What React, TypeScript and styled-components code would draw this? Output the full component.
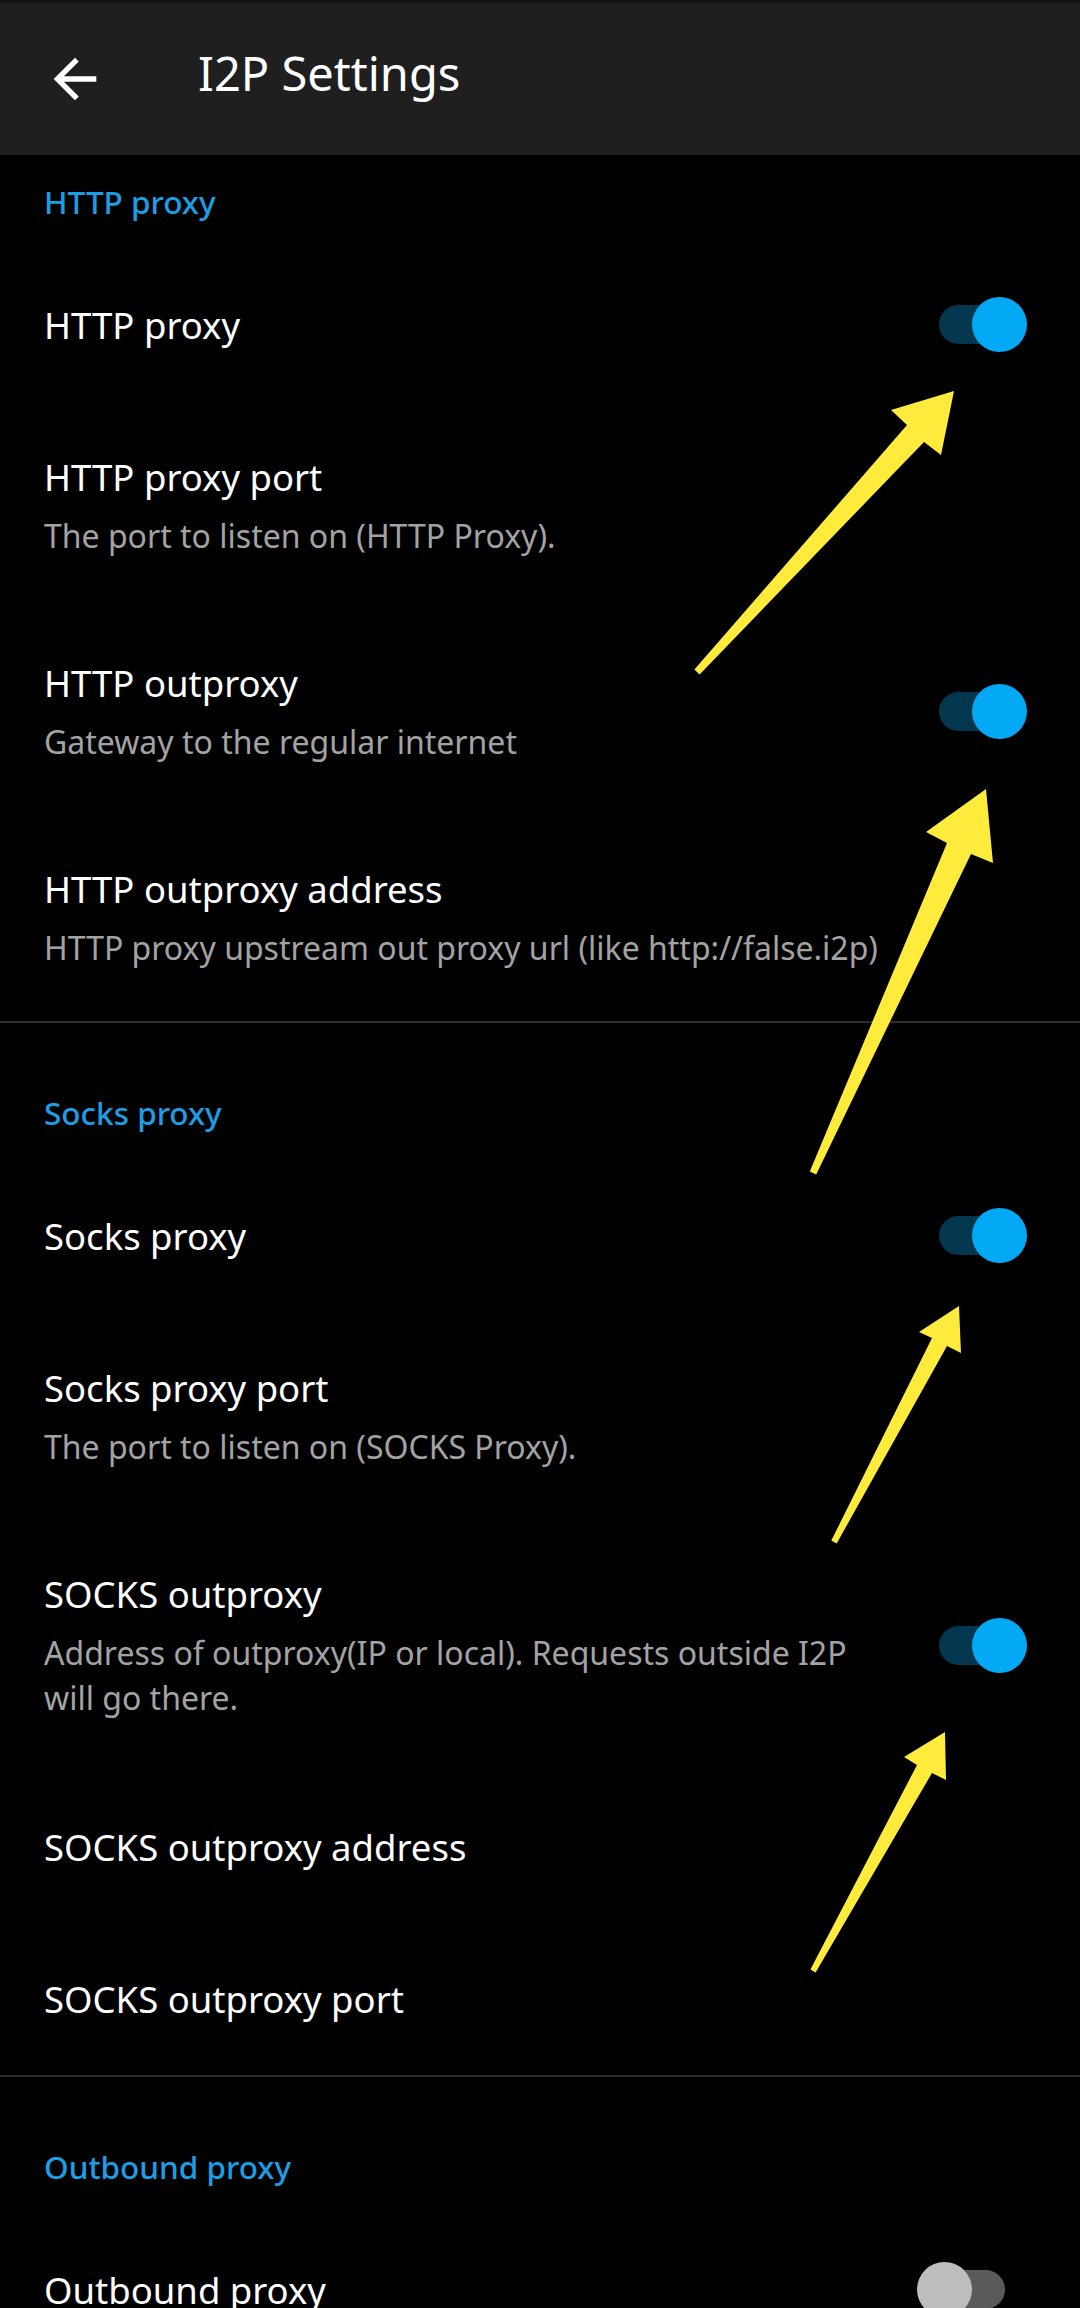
import React from "react";
import styled, { createGlobalStyle } from "styled-components";

const GlobalStyle = createGlobalStyle`
  html, body {
    margin: 0;
    padding: 0;
    background: #000000;
  }
  body {
    font-family: "Noto Sans", "Open Sans", sans-serif;
    -webkit-font-smoothing: antialiased;
  }
`;

const Page = styled.div`
  position: relative;
  width: 1080px;
  min-height: 2308px;
  overflow: hidden;
  background: #000000;
  color: #ffffff;
`;

const AppBar = styled.header`
  display: flex;
  align-items: center;
  height: 155px;
  box-sizing: border-box;
  border-top: 3px solid #141414;
  background: #1f1f1f;
`;

const BackButton = styled.button`
  display: flex;
  align-items: center;
  justify-content: center;
  width: 64px;
  height: 64px;
  margin: 0 0 0 43px;
  padding: 0;
  border: none;
  background: transparent;
  color: #ffffff;
`;

const AppTitle = styled.h1`
  margin: 0 0 12px 91px;
  font-size: 47px;
  font-weight: 400;
  color: #ffffff;
`;

const Section = styled.section<{ $first?: boolean }>`
  display: flex;
  flex-direction: column;
  border-top: ${(p) => (p.$first ? "none" : "2px solid #2c2c2c")};
  padding-top: ${(p) => (p.$first ? "0" : "43px")};
`;

const CategoryTitle = styled.div`
  display: flex;
  align-items: center;
  height: 92px;
  padding-left: 44px;
  font-size: 31.5px;
  font-weight: 500;
  color: #1a9fe6;
`;

const Row = styled.div<{ $hasWidget?: boolean }>`
  display: flex;
  align-items: center;
  min-height: ${(p) => (p.$hasWidget ? "156px" : "152px")};
  padding: 0 53px 0 44px;
`;

const TextBlock = styled.div<{ $twoLine?: boolean }>`
  display: flex;
  flex-direction: column;
  flex: 1;
  min-width: 0;
  padding: ${(p) => (p.$twoLine ? "47px 40px 51px 0" : "49px 40px 49px 0")};
`;

const Title = styled.div`
  font-size: 36.5px;
  line-height: 54px;
  color: #ffffff;
`;

const Summary = styled.div`
  margin-top: 9px;
  font-size: 32px;
  line-height: 45px;
  color: #a3a3a3;
`;

const SwitchBox = styled.div`
  position: relative;
  flex: none;
  width: 110px;
  height: 56px;
`;

const Track = styled.div<{ $on: boolean }>`
  position: absolute;
  left: 22px;
  top: 8px;
  width: 66px;
  height: 39px;
  border-radius: 20px;
  background: ${(p) => (p.$on ? "#03374f" : "#5a5a5a")};
`;

const Thumb = styled.div<{ $on: boolean }>`
  position: absolute;
  top: 0;
  left: ${(p) => (p.$on ? "55px" : "0")};
  width: 55px;
  height: 55px;
  border-radius: 50%;
  background: ${(p) => (p.$on ? "#03a9f4" : "#bdbdbd")};
`;

const Overlay = styled.svg`
  position: absolute;
  left: 0;
  top: 0;
  width: 1080px;
  height: 2308px;
  pointer-events: none;
`;

type Pref = { title: string; summary?: string; toggle?: boolean };
type Group = { name: string; prefs: Pref[] };

const groups: Group[] = [
  {
    name: "HTTP proxy",
    prefs: [
      { title: "HTTP proxy", toggle: true },
      { title: "HTTP proxy port", summary: "The port to listen on (HTTP Proxy)." },
      { title: "HTTP outproxy", summary: "Gateway to the regular internet", toggle: true },
      {
        title: "HTTP outproxy address",
        summary: "HTTP proxy upstream out proxy url (like http://false.i2p)",
      },
    ],
  },
  {
    name: "Socks proxy",
    prefs: [
      { title: "Socks proxy", toggle: true },
      { title: "Socks proxy port", summary: "The port to listen on (SOCKS Proxy)." },
      {
        title: "SOCKS outproxy",
        summary: "Address of outproxy(IP or local). Requests outside I2P will go there.",
        toggle: true,
      },
      { title: "SOCKS outproxy address" },
      { title: "SOCKS outproxy port" },
    ],
  },
  {
    name: "Outbound proxy",
    prefs: [{ title: "Outbound proxy", toggle: false }],
  },
];

type Pt = [number, number];
type ArrowSpec = { tail: Pt; tip: Pt; b1: Pt; n1: Pt; n2: Pt; b2: Pt; hw: number };

const arrows: ArrowSpec[] = [
  { tail: [697, 672], tip: [954, 391], b1: [891, 410], n1: [907, 425], n2: [924, 442], b2: [941, 455], hw: 3.5 },
  { tail: [813, 1173], tip: [986, 789], b1: [926, 832], n1: [947, 843], n2: [971, 854], b2: [993, 863], hw: 3.5 },
  { tail: [834, 1542], tip: [959, 1306], b1: [919, 1332], n1: [932, 1338], n2: [947, 1346], b2: [961, 1353], hw: 3 },
  { tail: [813, 1971], tip: [945, 1732], b1: [904, 1757], n1: [917, 1765], n2: [932, 1773], b2: [946, 1780], hw: 3 },
];

function arrowPoints(a: ArrowSpec): string {
  const dx = a.tip[0] - a.tail[0];
  const dy = a.tip[1] - a.tail[1];
  const len = Math.hypot(dx, dy);
  const nx = -dy / len;
  const ny = dx / len;
  const side = Math.sign((a.n1[0] - a.tail[0]) * nx + (a.n1[1] - a.tail[1]) * ny) || 1;
  const tA: Pt = [a.tail[0] + nx * a.hw * side, a.tail[1] + ny * a.hw * side];
  const tB: Pt = [a.tail[0] - nx * a.hw * side, a.tail[1] - ny * a.hw * side];
  return [tA, a.n1, a.b1, a.tip, a.b2, a.n2, tB].map((p) => `${p[0].toFixed(1)},${p[1].toFixed(1)}`).join(" ");
}

function Switch({ on }: { on: boolean }) {
  return (
    <SwitchBox>
      <Track $on={on} />
      <Thumb $on={on} />
    </SwitchBox>
  );
}

function BackIcon() {
  return (
    <svg width="64" height="64" viewBox="0 0 24 24" fill="currentColor">
      <path d="M20 11H7.83l5.59-5.59L12 4l-8 8 8 8 1.41-1.41L7.83 13H20v-2z" />
    </svg>
  );
}

export default function App() {
  return (
    <>
      <GlobalStyle />
      <Page>
        <AppBar>
          <BackButton aria-label="Back">
            <BackIcon />
          </BackButton>
          <AppTitle>I2P Settings</AppTitle>
        </AppBar>
        {groups.map((g, gi) => (
          <Section key={g.name} $first={gi === 0}>
            <CategoryTitle>{g.name}</CategoryTitle>
            {g.prefs.map((p) => (
              <Row key={p.title} $hasWidget={p.toggle !== undefined}>
                <TextBlock $twoLine={!!p.summary}>
                  <Title>{p.title}</Title>
                  {p.summary && <Summary>{p.summary}</Summary>}
                </TextBlock>
                {p.toggle !== undefined && <Switch on={p.toggle} />}
              </Row>
            ))}
          </Section>
        ))}
        <Overlay viewBox="0 0 1080 2308">
          {arrows.map((a, i) => (
            <polygon key={i} points={arrowPoints(a)} fill="#ffeb3b" />
          ))}
        </Overlay>
      </Page>
    </>
  );
}
